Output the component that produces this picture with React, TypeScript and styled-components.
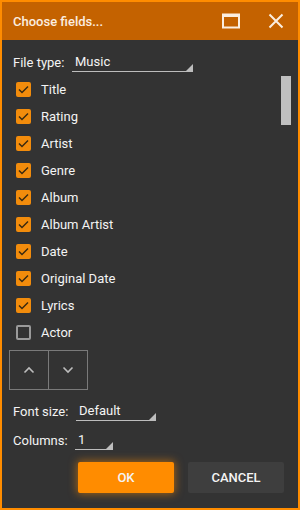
import React, { useState } from "react";
import styled, { createGlobalStyle } from "styled-components";

const GlobalStyle = createGlobalStyle`
  html, body {
    margin: 0;
    padding: 0;
    background: #333333;
  }
  * {
    box-sizing: border-box;
  }
`;

interface Field {
  name: string;
  checked: boolean;
}

const initialFields: Field[] = [
  { name: "Title", checked: true },
  { name: "Rating", checked: true },
  { name: "Artist", checked: true },
  { name: "Genre", checked: true },
  { name: "Album", checked: true },
  { name: "Album Artist", checked: true },
  { name: "Date", checked: true },
  { name: "Original Date", checked: true },
  { name: "Lyrics", checked: true },
  { name: "Actor", checked: false },
];

const App: React.FC = () => {
  const [fields, setFields] = useState(initialFields);

  const toggle = (i: number) => {
    setFields(fields.map((f, j) => (j === i ? { ...f, checked: !f.checked } : f)));
  };

  return (
    <>
      <GlobalStyle />
      <Window>
        <TitleBar>
          <Title>Choose fields...</Title>
          <TitleButton>
            <svg width="18" height="16" viewBox="0 0 18 16">
              <rect x="1" y="1.5" width="16" height="13" fill="none" stroke="#fbeee0" strokeWidth="2" />
              <rect x="1" y="1" width="16" height="3" fill="#fbeee0" />
            </svg>
          </TitleButton>
          <TitleButton>
            <svg width="16" height="16" viewBox="0 0 16 16">
              <path d="M1.5 1.5 L14.5 14.5 M14.5 1.5 L1.5 14.5" stroke="#fbeee0" strokeWidth="2" />
            </svg>
          </TitleButton>
        </TitleBar>
        <Body>
          <FormRow>
            <Label width={59}>File type:</Label>
            <Select width={121}>Music</Select>
          </FormRow>
          <ListArea>
            <List>
              {fields.map((f, i) => (
                <Item key={f.name} onClick={() => toggle(i)}>
                  <Check checked={f.checked}>
                    {f.checked && (
                      <svg width="11" height="9" viewBox="0 0 11 9">
                        <path d="M1 4.5 L4 7.5 L10 1.5" fill="none" stroke="#3a2a10" strokeWidth="1.5" />
                      </svg>
                    )}
                  </Check>
                  {f.name}
                </Item>
              ))}
            </List>
            <ScrollThumb />
          </ListArea>
          <Arrows>
            <ArrowButton>
              <svg width="12" height="8" viewBox="0 0 12 8">
                <path d="M1.5 6.5 L6 2 L10.5 6.5" fill="none" stroke="#bdbdbd" strokeWidth="1.6" />
              </svg>
            </ArrowButton>
            <ArrowButton>
              <svg width="12" height="8" viewBox="0 0 12 8">
                <path d="M1.5 1.5 L6 6 L10.5 1.5" fill="none" stroke="#bdbdbd" strokeWidth="1.6" />
              </svg>
            </ArrowButton>
          </Arrows>
          <FormRow gap={9}>
            <Label width={63}>Font size:</Label>
            <Select width={80}>Default</Select>
          </FormRow>
          <FormRow gap={12}>
            <Label width={62}>Columns:</Label>
            <Select width={38}>1</Select>
          </FormRow>
          <Buttons>
            <Button primary>OK</Button>
            <Button>CANCEL</Button>
          </Buttons>
        </Body>
      </Window>
    </>
  );
};

const Window = styled.div`
  width: 300px;
  height: 510px;
  border: 2px solid #ff8c00;
  background: #333333;
  display: flex;
  flex-direction: column;
  font-family: Roboto, "Liberation Sans", sans-serif;
  color: #f4f4f4;
  overflow: hidden;
`;

const TitleBar = styled.div`
  height: 38px;
  background: #c46200;
  display: flex;
  align-items: center;
  padding: 0 13px 0 11px;
  gap: 27px;
`;

const Title = styled.div`
  flex: 1;
  font-size: 13px;
  font-weight: 500;
  color: #fbeee0;
`;

const TitleButton = styled.div`
  width: 18px;
  height: 16px;
  display: flex;
  align-items: center;
  justify-content: center;
`;

const Body = styled.div`
  flex: 1;
  display: flex;
  flex-direction: column;
  padding: 12px 12px 0 7px;
`;

const FormRow = styled.div<{ gap?: number }>`
  display: flex;
  align-items: center;
  height: 20px;
  padding-left: 4px;
  margin-bottom: ${(p) => p.gap ?? 4}px;
  font-size: 13px;
`;

const Label = styled.div<{ width: number }>`
  width: ${(p) => p.width}px;
  white-space: nowrap;
`;

const Select = styled.div<{ width: number }>`
  position: relative;
  width: ${(p) => p.width}px;
  height: 20px;
  padding: 1px 0 0 3px;
  border-bottom: 1px solid #bdbdbd;
  font-size: 13px;
  line-height: 17px;
  &:after {
    content: "";
    position: absolute;
    right: 0;
    bottom: 0;
    width: 0;
    height: 0;
    border-left: 7px solid transparent;
    border-bottom: 7px solid #bdbdbd;
  }
`;

const ListArea = styled.div`
  position: relative;
  height: 270px;
`;

const List = styled.div`
  display: flex;
  flex-direction: column;
`;

const Item = styled.div`
  height: 27px;
  display: flex;
  align-items: center;
  gap: 10px;
  padding-left: 7px;
  font-size: 13px;
  cursor: pointer;
`;

const Check = styled.div<{ checked: boolean }>`
  width: 15px;
  height: 15px;
  border-radius: 2px;
  display: flex;
  align-items: center;
  justify-content: center;
  background: ${(p) => (p.checked ? "#f28c0c" : "transparent")};
  border: ${(p) => (p.checked ? "none" : "2px solid #9a9a9a")};
`;

const ScrollThumb = styled.div`
  position: absolute;
  right: -5px;
  top: 0;
  width: 10px;
  height: 49px;
  background: #c0c0c0;
`;

const Arrows = styled.div`
  display: flex;
  margin: 4px 0 11px 0;
`;

const ArrowButton = styled.div`
  width: 40px;
  height: 40px;
  border: 1px solid #7a7a7a;
  display: flex;
  align-items: center;
  justify-content: center;
  & + & {
    margin-left: -1px;
  }
`;

const Buttons = styled.div`
  display: flex;
  justify-content: flex-end;
  gap: 14px;
  padding-right: 2px;
`;

const Button = styled.div<{ primary?: boolean }>`
  width: 96px;
  height: 31px;
  border-radius: 2px;
  display: flex;
  align-items: center;
  justify-content: center;
  font-size: 13px;
  font-weight: 500;
  color: #f4f4f4;
  background: ${(p) => (p.primary ? "#ff8c00" : "#3e3e3e")};
  box-shadow: ${(p) => (p.primary ? "0 0 8px 1px rgba(255, 140, 0, 0.55)" : "none")};
`;

export default App;
